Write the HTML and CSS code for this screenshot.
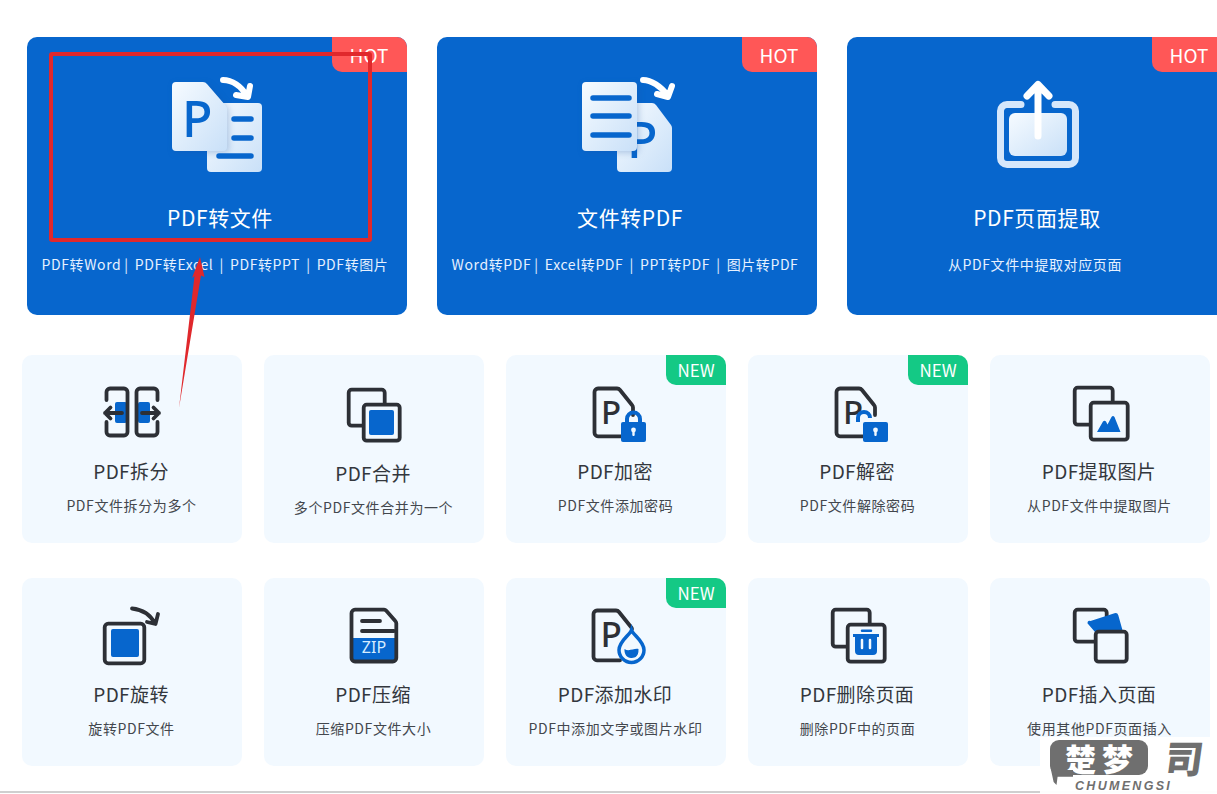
FILE: index.html
```html
<!DOCTYPE html>
<html lang="zh-CN">
<head>
<meta charset="utf-8">
<title>PDF工具</title>
<link rel="stylesheet" href="styles.css">
</head>
<body>
<div class="page">
  <section class="heroes">
    <article class="hero">
      <span class="badge hot">HOT</span>
      <svg class="hero-icon" viewBox="0 0 100 100" width="100" height="100">
        <defs>
          <linearGradient id="paper" x1="0" y1="0" x2="1" y2="1"><stop offset="0" stop-color="#f6fbff"/><stop offset="1" stop-color="#c9e0f8"/></linearGradient>
        </defs>
        <path class="paper" d="M44 26H91a4 4 0 0 1 4 4V91a4 4 0 0 1-4 4H44a4 4 0 0 1-4-4V30a4 4 0 0 1 4-4Z"/>
        <path class="paper shadowed" d="M9 5H36a5 5 0 0 1 4 2L59 29a5 5 0 0 1 1 3V70a4 4 0 0 1-4 4H9a4 4 0 0 1-4-4V9a4 4 0 0 1 4-4Z"/>
        <text class="hero-p" x="15" y="60">P</text>
        <path class="hero-bar" d="M67 42H84M67 61H84M52 79H84"/>
        <path class="hero-arrow" d="M56 3C65 3 74 9 80 19M83 9L81 20L69 18"/>
      </svg>
      <h2 class="hero-title hero-title-off">PDF转文件</h2>
      <p class="hero-sub">PDF转Word |  PDF转Excel  |  PDF转PPT  |  PDF转图片</p>
    </article>
    <article class="hero">
      <span class="badge hot">HOT</span>
      <svg class="hero-icon" viewBox="0 0 100 100" width="100" height="100">
        <path class="paper" d="M44 26H75a5 5 0 0 1 4 2L94 48a5 5 0 0 1 1 3V91a4 4 0 0 1-4 4H44a4 4 0 0 1-4-4V30a4 4 0 0 1 4-4Z"/>
        <text class="hero-p" x="50" y="81">P</text>
        <rect class="paper shadowed" x="5" y="5" width="55" height="69" rx="4"/>
        <path class="hero-bar" d="M16 21H52M16 39H52M16 58H52"/>
        <path class="hero-arrow" d="M66 3C74 3 84 9 91 19M95 9L91 20L80 17"/>
      </svg>
      <h2 class="hero-title hero-title-off">文件转PDF</h2>
      <p class="hero-sub">Word转PDF |  Excel转PDF  |  PPT转PDF  |  图片转PDF</p>
    </article>
    <article class="hero">
      <span class="badge hot">HOT</span>
      <svg class="hero-icon" viewBox="0 0 100 100" width="100" height="100">
        <path class="hero-frame" d="M34 27.500H20a6.500 6.500 0 0 0-6.500 6.500V81a6.500 6.500 0 0 0 6.500 6.500H82a6.500 6.500 0 0 0 6.500-6.500V34a6.500 6.500 0 0 0-6.500-6.500H68"/>
        <rect class="paper" x="22" y="36" width="58" height="43" rx="6"/>
        <path class="hero-up" d="M51 59V7.500M40 19L51 7.500L62 19"/>
      </svg>
      <h2 class="hero-title">PDF页面提取</h2>
      <p class="hero-sub">从PDF文件中提取对应页面</p>
    </article>
  </section>

  <section class="tools">
    <article class="tool">
      <svg class="tool-icon" viewBox="0 0 60 60" width="60" height="60">
        <rect class="bl" x="13" y="17" width="12" height="21" rx="2"/>
        <rect class="bl" x="36" y="17" width="12" height="21" rx="2"/>
        <path class="ln" d="M4.500 15V7a3.500 3.500 0 0 1 3.500-3.500H22a3.500 3.500 0 0 1 3.500 3.500V47a3.500 3.500 0 0 1-3.500 3.500H8a3.500 3.500 0 0 1-3.500-3.500V37"/>
        <path class="ln" d="M55.500 15V7a3.500 3.500 0 0 0-3.500-3.500H38a3.500 3.500 0 0 0-3.500 3.500V47a3.500 3.500 0 0 0 3.500 3.500H52a3.500 3.500 0 0 0 3.500-3.500V37"/>
        <path class="ln" d="M20 28H3M8.500 22.500L3 28L8.500 33.500M40 28H57M51.500 22.500L57 28L51.500 33.500"/>
      </svg>
      <h3 class="tool-title">PDF拆分</h3>
      <p class="tool-sub">PDF文件拆分为多个</p>
    </article>
    <article class="tool tool-low">
      <svg class="tool-icon" viewBox="0 0 60 60" width="60" height="60">
        <rect class="ln" x="4.700" y="4.700" width="36" height="36" rx="3"/>
        <rect class="ln back" x="19.700" y="19.700" width="36" height="36" rx="3"/>
        <rect class="bl" x="25" y="25" width="25" height="25" rx="2"/>
      </svg>
      <h3 class="tool-title">PDF合并</h3>
      <p class="tool-sub">多个PDF文件合并为一个</p>
    </article>
    <article class="tool">
      <span class="badge new">NEW</span>
      <svg class="tool-icon" viewBox="0 0 60 60" width="60" height="60">
        <path class="ln" d="M38 51.300H12a3.500 3.500 0 0 1-3.500-3.500V7a3.500 3.500 0 0 1 3.500-3.500H31a4 4 0 0 1 3 1.500L46 20a4 4 0 0 1 1 2.500V30"/>
        <text class="doc-p" x="15" y="39">P</text>
        <path class="shackle" d="M41 38V34a6.500 6.500 0 0 1 13 0V38"/>
        <rect class="bl" x="35" y="37" width="25" height="20" rx="2"/>
        <circle class="key" cx="47.500" cy="45" r="2.400"/><rect class="key" x="46.300" y="45" width="2.400" height="6" rx="1"/>
      </svg>
      <h3 class="tool-title">PDF加密</h3>
      <p class="tool-sub">PDF文件添加密码</p>
    </article>
    <article class="tool">
      <span class="badge new">NEW</span>
      <svg class="tool-icon" viewBox="0 0 60 60" width="60" height="60">
        <path class="ln" d="M38 51.300H12a3.500 3.500 0 0 1-3.500-3.500V7a3.500 3.500 0 0 1 3.500-3.500H31a4 4 0 0 1 3 1.500L46 20a4 4 0 0 1 1 2.500V30"/>
        <text class="doc-p" x="15" y="39">P</text>
        <path class="shackle" d="M30 37V33a6 6 0 0 1 12 0"/>
        <rect class="bl" x="35" y="37" width="25" height="20" rx="2"/>
        <circle class="key" cx="47.500" cy="45" r="2.400"/><rect class="key" x="46.300" y="45" width="2.400" height="6" rx="1"/>
      </svg>
      <h3 class="tool-title">PDF解密</h3>
      <p class="tool-sub">PDF文件解除密码</p>
    </article>
    <article class="tool">
      <svg class="tool-icon" viewBox="0 0 60 60" width="60" height="60">
        <rect class="ln" x="4.700" y="2.700" width="38" height="37" rx="3"/>
        <rect class="ln back" x="20.700" y="17.700" width="37" height="37" rx="3"/>
        <path class="bl" d="M27 47L33 36.500Q34.500 35 36 36.500L37.500 39.500L41.500 32Q43 30 44.500 32L50.500 47Z"/>
      </svg>
      <h3 class="tool-title">PDF提取图片</h3>
      <p class="tool-sub">从PDF文件中提取图片</p>
    </article>

    <article class="tool">
      <svg class="tool-icon" viewBox="0 0 60 60" width="60" height="60">
        <rect class="ln" x="2.700" y="15.700" width="39.600" height="39.600" rx="3.500"/>
        <rect class="bl" x="9" y="21" width="28" height="28" rx="2"/>
        <path class="ln" d="M30 0.500C40 1.500 48 6 53 15.500M56 6L53.500 16L45 14"/>
      </svg>
      <h3 class="tool-title">PDF旋转</h3>
      <p class="tool-sub">旋转PDF文件</p>
    </article>
    <article class="tool">
      <svg class="tool-icon" viewBox="0 0 60 60" width="60" height="60">
        <path class="bl" d="M7 30H53V50a3 3 0 0 1-3 3H10a3 3 0 0 1-3-3Z"/>
        <path class="ln" d="M11 1.700H40a3 3 0 0 1 2.300 1L51.300 13a3.500 3.500 0 0 1 1 2.300V50a3.500 3.500 0 0 1-3.500 3.500H11a3.500 3.500 0 0 1-3.500-3.500V5.200A3.500 3.500 0 0 1 11 1.700Z"/>
        <path class="ln" d="M18 13H36M18 23H50"/>
        <text class="zip" x="30" y="45">ZIP</text>
      </svg>
      <h3 class="tool-title">PDF压缩</h3>
      <p class="tool-sub">压缩PDF文件大小</p>
    </article>
    <article class="tool">
      <span class="badge new">NEW</span>
      <svg class="tool-icon" viewBox="0 0 60 60" width="60" height="60">
        <path class="ln" d="M34 52.300H11a3.500 3.500 0 0 1-3.500-3.500V6a3.500 3.500 0 0 1 3.500-3.500H30a4 4 0 0 1 3 1.500L45 19a4 4 0 0 1 1 2"/>
        <text class="doc-p drop-p" x="14.500" y="39">P</text>
        <path class="drop" d="M45.500 22C47 27 58 33 58 42A12.500 12.500 0 0 1 33 42C33 33 44 27 45.500 22Z"/>
        <path class="bl" d="M38.500 41C43 44 48 40 52.500 41C53 50 47 50 45 50C41 50 38 46 38.500 41Z"/>
      </svg>
      <h3 class="tool-title">PDF添加水印</h3>
      <p class="tool-sub">PDF中添加文字或图片水印</p>
    </article>
    <article class="tool">
      <svg class="tool-icon" viewBox="0 0 60 60" width="60" height="60">
        <rect class="ln" x="4.700" y="1.700" width="37" height="37" rx="3"/>
        <rect class="ln back" x="19.700" y="16.700" width="37" height="37" rx="3"/>
        <path class="bl" d="M34 21.500H43a1 1 0 0 1 0 2.500H34a1 1 0 0 1 0-2.500ZM25 26H51V29H49V43a4 4 0 0 1-4 4H31a4 4 0 0 1-4-4V29H25Z"/>
        <path class="slot" d="M34 32V40M42 32V40"/>
      </svg>
      <h3 class="tool-title">PDF删除页面</h3>
      <p class="tool-sub">删除PDF中的页面</p>
    </article>
    <article class="tool">
      <svg class="tool-icon" viewBox="0 0 60 60" width="60" height="60">
        <rect class="ln" x="4.700" y="1.700" width="32" height="32" rx="3"/>
        <path class="bl" d="M20.500 13L44.500 5.300a3 3 0 0 1 3.800 2L53 24H25L18.500 16.500a2 2 0 0 1 2-3.500Z"/>
        <rect class="ln back" x="25.700" y="23.700" width="31" height="30" rx="3"/>
      </svg>
      <h3 class="tool-title">PDF插入页面</h3>
      <p class="tool-sub">使用其他PDF页面插入</p>
    </article>
  </section>
  <div class="rule"></div>

  <svg class="annotation" viewBox="0 0 1217 794" width="1217" height="794">
    <rect class="mark" x="51" y="54" width="319" height="186" rx="1"/>
    <polygon class="pointer" points="200,257 204.500,277 201,275.500 179,408 194.500,276 192,278"/>
  </svg>

  <aside class="stamp">
    <div class="stamp-bubble">
      <span class="stamp-cn">楚梦</span>
      <i class="stamp-tail"></i>
    </div>
    <span class="stamp-glyph">司</span>
    <span class="stamp-en">CHUMENGSI</span>
  </aside>
</div>
</body>
</html>
```
FILE: styles.css
```css
* { box-sizing: border-box; }
html, body { margin: 0; padding: 0; background: #fff; }
body { font-family: "Noto Sans CJK SC", "Noto Sans", sans-serif; }
.page { position: relative; width: 1217px; height: 794px; overflow: hidden; }

.heroes { display: flex; gap: 30px; padding: 37px 0 0 27px; }
.hero {
  position: relative; flex: 0 0 380px; height: 278px; border-radius: 10px;
  background: #0766cd; color: #fff; text-align: center; padding-top: 40px; overflow: hidden;
}
.hero-icon { display: block; margin: 0 auto; }
.hero-title { margin: 24px 0 0; font-size: 21px; font-weight: 400; line-height: 32px; letter-spacing: .6px; }
.hero-title-off { padding-left: 6px; }
.hero-sub { margin: 16px 0 0; padding-right: 4px; font-size: 14px; line-height: 30px; color: #e6f1ff; white-space: pre; letter-spacing: .6px; word-spacing: -.7px; }

.badge { position: absolute; top: 0; right: 0; text-align: center; color: #fff; border-bottom-left-radius: 10px; }
.hot { width: 75px; height: 35px; background: #ff5757; font-size: 19px; line-height: 35px; padding-right: 1px; }
.new { width: 60px; height: 30px; background: #14c985; font-size: 17px; line-height: 30px; }

.paper { fill: url(#paper); }
.shadowed { filter: drop-shadow(2px 2px 3px rgba(20, 80, 160, .25)); }
.hero-p { font-family: "Noto Sans", sans-serif; font-size: 50px; font-weight: 500; fill: #0766cd; }
.hero-bar { fill: none; stroke: #0766cd; stroke-width: 5.500; stroke-linecap: round; }
.hero-arrow { fill: none; stroke: #fff; stroke-width: 6; stroke-linecap: round; stroke-linejoin: round; }
.hero-frame { fill: none; stroke: #d5e7fb; stroke-width: 7; stroke-linecap: round; }
.hero-up { fill: none; stroke: #fff; stroke-width: 7; stroke-linecap: round; stroke-linejoin: round; }

.tools { display: grid; grid-template-columns: repeat(5, 220px); column-gap: 22px; row-gap: 35px; margin-top: 40px; padding-left: 22px; }
.tool { position: relative; height: 188px; border-radius: 10px; background: #f2f9ff; text-align: center; padding-top: 30px; overflow: hidden; }
.tool-icon { display: block; margin: 0 auto; overflow: visible; }
.tool-title { margin: 11px 0 0; padding-right: 2px; font-size: 19px; font-weight: 400; line-height: 30px; color: #33373d; letter-spacing: .4px; }
.tool-sub { margin: 5px 0 0; padding-right: 1px; font-size: 14px; line-height: 28px; color: #43474d; letter-spacing: .6px; }
.tool-low .tool-title { margin-top: 13px; }

.ln { fill: none; stroke: #2d3036; stroke-width: 3.800; stroke-linecap: round; stroke-linejoin: round; }
.ln.back { fill: #f2f9ff; }
.bl { fill: #0766cd; }
.doc-p { font-family: "Noto Sans", sans-serif; font-size: 33px; font-weight: 500; fill: #2d3036; }
.drop-p { font-size: 35px; }
.shackle { fill: none; stroke: #0766cd; stroke-width: 4; }
.key { fill: #f2f9ff; }
.drop { fill: #f2f9ff; stroke: #0766cd; stroke-width: 3.500; }
.slot { fill: none; stroke: #f2f9ff; stroke-width: 2.500; stroke-linecap: round; }
.zip { font-family: "Noto Sans", sans-serif; font-size: 16px; font-weight: 400; fill: #d6ecff; text-anchor: middle; }

.rule { height: 2px; margin-top: 25px; background: #cfcfcf; }

.annotation { position: absolute; left: 0; top: 0; pointer-events: none; }
.mark { fill: none; stroke: #e0282c; stroke-width: 4; }
.pointer { fill: #e0282c; }

.stamp { position: absolute; right: 0; bottom: 0; width: 177px; height: 57px; background: rgba(255, 255, 255, .96); }
.stamp-bubble { position: absolute; left: 10px; top: 3px; width: 98px; height: 35px; border-radius: 9px; background: #6f6f6f; text-align: center; }
.stamp-cn { display: block; color: #fff; font-size: 31px; font-weight: 900; line-height: 35px; letter-spacing: 6px; padding-left: 6px; }
.stamp-tail { position: absolute; left: 1px; top: 30px; width: 22px; height: 15px; background: #6f6f6f; clip-path: polygon(0 0, 100% 0, 100% 45%, 30% 45%, 25% 100%, 12% 80%); }
.stamp-glyph { position: absolute; left: 121px; top: 0; width: 47px; color: #6f6f6f; font-size: 38px; font-weight: 900; line-height: 40px; text-align: center; transform: skewX(-8deg); }
.stamp-en { position: absolute; left: 35px; top: 41px; color: #6f6f6f; font-family: "Liberation Sans", sans-serif; font-size: 12.500px; font-weight: 700; font-style: italic; letter-spacing: 2.300px; line-height: 16px; }
```
